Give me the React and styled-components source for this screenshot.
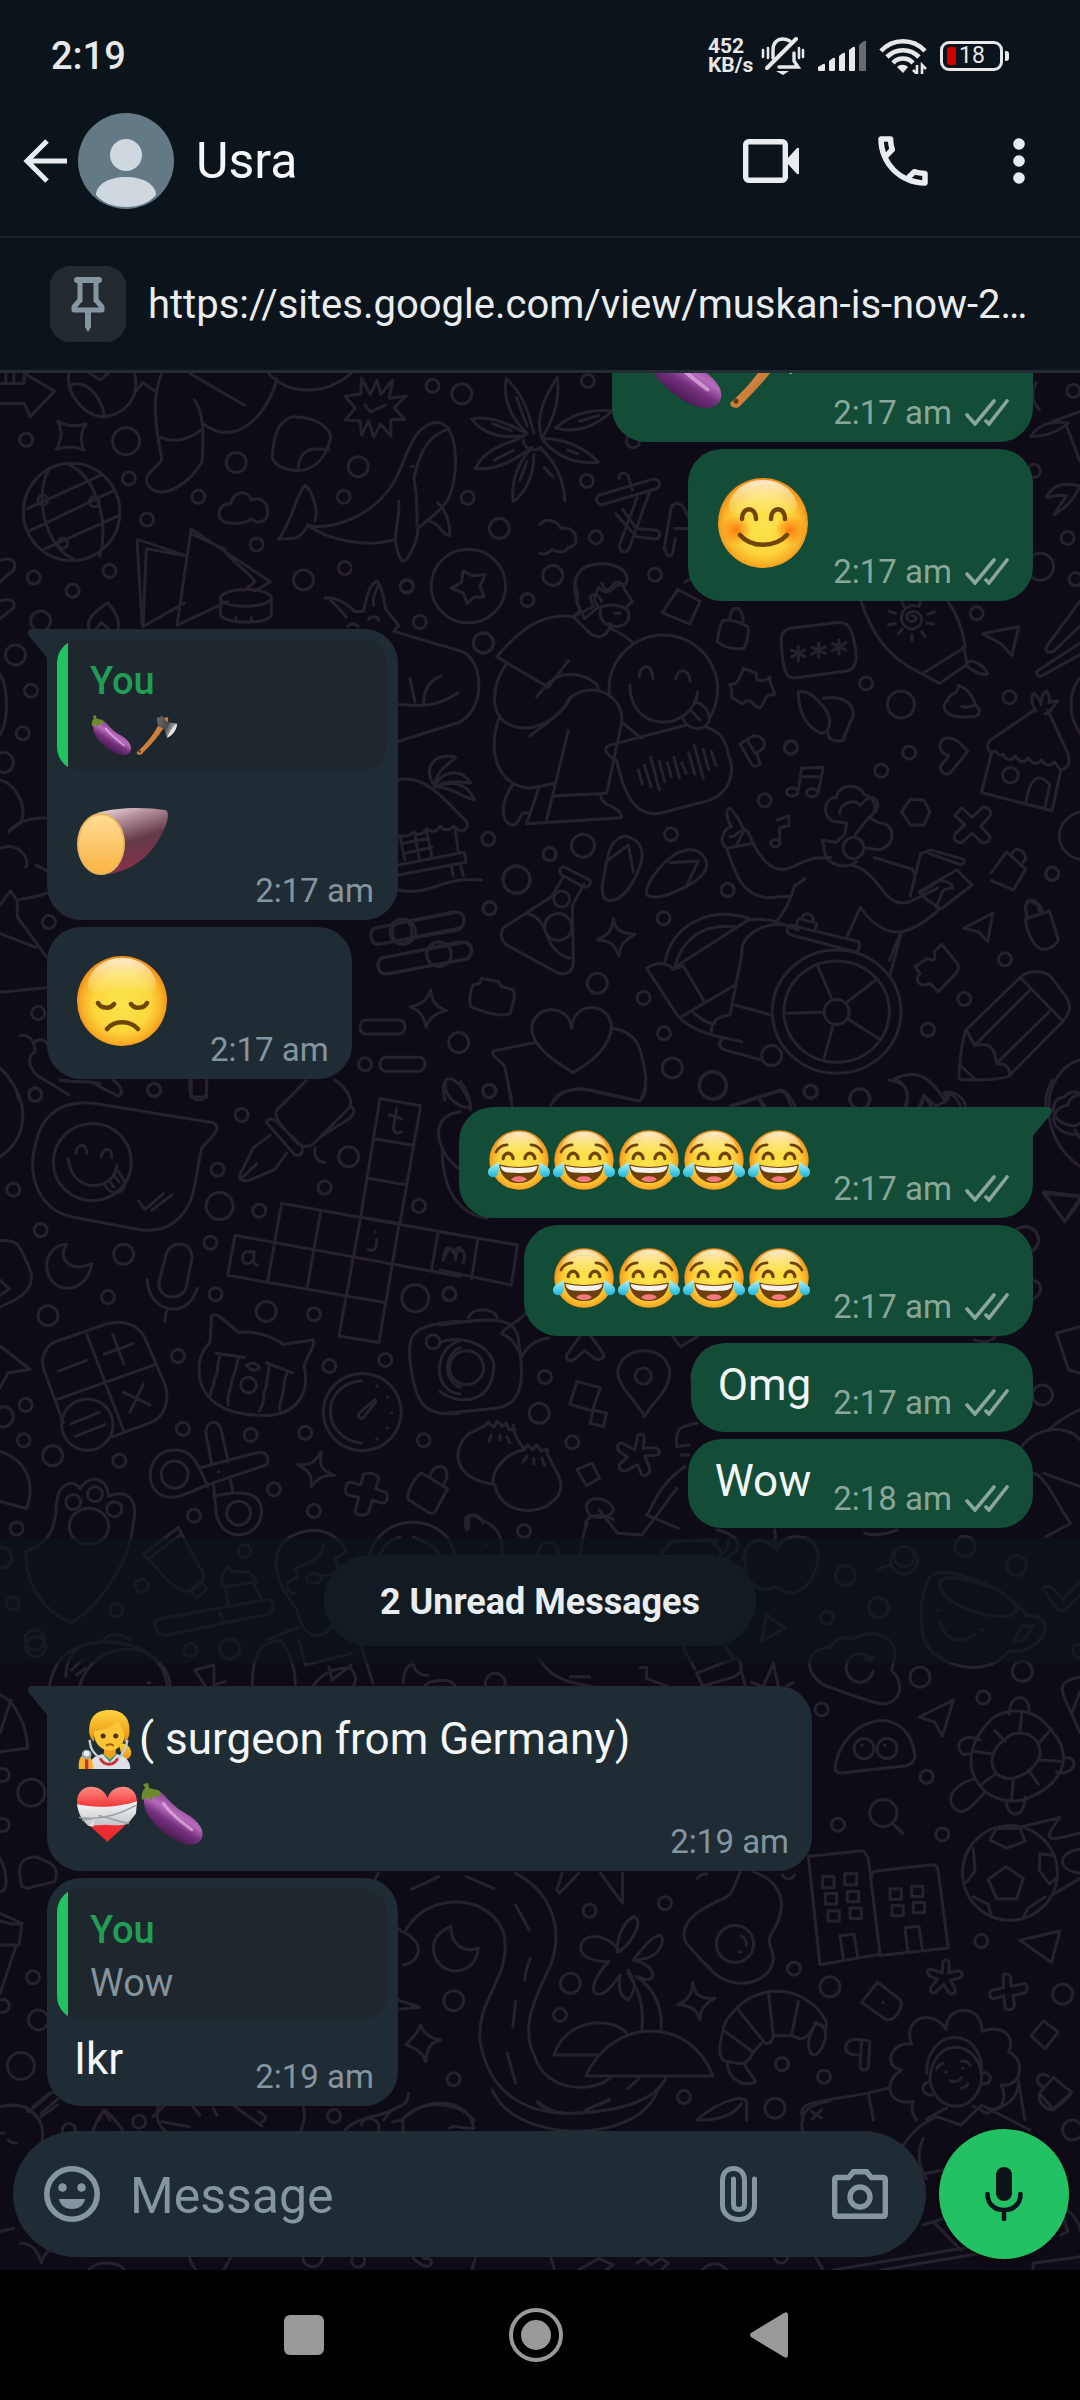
import React from "react";
import styled, { createGlobalStyle, css } from "styled-components";

const GlobalStyle = createGlobalStyle`
  *, *::before, *::after { box-sizing: border-box; }
  body { margin: 0; background: #000; }
  button { border: 0; padding: 0; background: none; color: inherit; font: inherit; cursor: pointer; }
  svg { display: block; flex: none; }
`;

/* ---------- layout ---------- */

const Screen = styled.div`
  display: flex;
  flex-direction: column;
  height: 100vh;
  font-family: Roboto, "Noto Sans", sans-serif;
  color: #e9edef;
  background: #0b141a;
`;

const StatusBar = styled.div`
  display: flex;
  align-items: center;
  flex: none;
  height: 86px;
  padding: 26px 71px 0 51px;
  color: #e8e8e8;
`;

const Clock = styled.time`
  flex: 1;
  font-size: 38px;
  font-weight: 500;
  line-height: 44px;
`;

const NetSpeed = styled.div`
  font-size: 21px;
  font-weight: 700;
  line-height: 19px;
  width: 53px;
`;

const StatusIcons = styled.div`
  display: flex;
  align-items: center;
  gap: 13px;
`;

const Battery = styled.div`
  display: flex;
  align-items: center;
`;

const BatteryShell = styled.div`
  display: flex;
  align-items: center;
  width: 63px;
  height: 30px;
  padding-left: 4px;
  border: 3px solid #e8e8e8;
  border-radius: 9px;
  font-size: 23px;
  line-height: 24px;
`;

const BatteryLevel = styled.span`
  width: 9px;
  height: 18px;
  margin-right: 3px;
  border-radius: 3px 1px 1px 3px;
  background: #d00000;
`;

const BatteryTip = styled.span`
  width: 4px;
  height: 10px;
  margin-left: 2px;
  border-radius: 0 3px 3px 0;
  background: #e8e8e8;
`;

const Header = styled.header`
  display: flex;
  align-items: center;
  flex: none;
  height: 152px;
  padding: 0 49px 0 23px;
  border-bottom: 2px solid #1a2329;
`;

const Contact = styled.h1`
  flex: 1;
  margin: 0 0 0 22px;
  font-size: 50px;
  font-weight: 400;
  line-height: 58px;
  color: #f5f7f8;
`;

const Avatar = styled.div`
  width: 96px;
  height: 96px;
  margin-left: 11px;
  border-radius: 50%;
  overflow: hidden;
  background: #637985;
`;

const HeaderActions = styled.div`
  display: flex;
  align-items: center;
  gap: 71px;
`;

const Pinned = styled.section`
  display: flex;
  align-items: center;
  gap: 22px;
  flex: none;
  height: 135px;
  padding: 0 40px 0 50px;
  border-bottom: 3px solid #242b32;
`;

const PinBadge = styled.span`
  display: grid;
  place-items: center;
  flex: none;
  width: 76px;
  height: 76px;
  border-radius: 20px;
  background: #232b31;
  color: #8596a0;
`;

const PinnedLink = styled.a`
  min-width: 0;
  padding-top: 2px;
  overflow: hidden;
  white-space: nowrap;
  text-overflow: ellipsis;
  font-size: 40px;
  line-height: 48px;
  color: #e9edef;
  text-decoration: none;
`;

const Main = styled.main`
  display: grid;
  grid-template: minmax(0, 1fr) / minmax(0, 1fr);
  flex: 1;
  min-height: 0;
  background: #0f0b16;
  overflow: hidden;
`;

const WallpaperSvg = styled.svg`
  grid-area: 1 / 1;
  width: 100%;
  height: 100%;
  fill: none;
  stroke: #26222d;
  stroke-width: 3px;
  stroke-linecap: round;
  stroke-linejoin: round;
  & g * { vector-effect: non-scaling-stroke; }
`;

const Chat = styled.div`
  grid-area: 1 / 1;
  display: flex;
  flex-direction: column;
  min-height: 0;
`;

const Messages = styled.div`
  display: flex;
  flex: 1;
  flex-direction: column;
  justify-content: flex-end;
  min-height: 0;
  overflow: hidden;
`;

const Group = styled.ol`
  display: flex;
  flex: none;
  flex-direction: column;
  align-items: ${(p) => (p.$out ? "flex-end" : "flex-start")};
  gap: 7px;
  margin: 0 0 ${(p) => p.$after || 0}px;
  padding: 0 47px;
  list-style: none;
`;

const Bubble = styled.li`
  position: relative;
  max-width: 86%;
  padding: 0 ${(p) => (p.$out ? 24 : 23)}px 0 27px;
  display: flex;
  column-gap: ${(p) => (p.$out ? 22 : 40)}px;
  justify-content: space-between;
  border-radius: 34px;
  background: ${(p) => (p.$out ? "#144d37" : "#1f2c34")};
  ${(p) =>
    p.$tail &&
    (p.$out
      ? css`border-top-right-radius: 0;`
      : css`border-top-left-radius: 0;`)}
  ${(p) =>
    p.$quoted &&
    css`
      flex-wrap: wrap;
      width: 351px;
      padding: 10px 11px 0 10px;
    `}
`;

const Body = styled.div`
  padding: ${(p) => (p.$quoted ? "13px 0 21px 17px" : "16px 0 21px")};
  font-size: 44px;
  line-height: 52px;
  color: #f3f6f7;
`;

const Line = styled.div`
  display: flex;
  align-items: center;
  height: ${(p) => p.$height}px;
`;

const Meta = styled.div`
  display: flex;
  align-items: center;
  align-self: flex-end;
  gap: 13px;
  padding: 0 ${(p) => (p.$quoted ? 13 : 0)}px 10px 0;
  font-size: 33px;
  line-height: 39px;
  white-space: nowrap;
  color: ${(p) => (p.$out ? "#89a69b" : "#8495a0")};
`;

const TailSvg = styled.svg`
  position: absolute;
  top: 0;
  ${(p) => (p.$out ? "right: -19px; transform: scaleX(-1);" : "left: -19px;")}
  fill: ${(p) => (p.$out ? "#144d37" : "#1f2c34")};
`;

const Quote = styled.blockquote`
  flex: none;
  width: 100%;
  margin: 0;
  padding: 20px 20px 14px 33px;
  border-radius: 24px;
  background: linear-gradient(to right, #22c163 11px, #1e272d 11px);
  font-size: 38px;
  line-height: 45px;
  color: #84949e;
`;

const QuoteAuthor = styled.div`
  margin-bottom: 8px;
  font-weight: 500;
  color: #229d57;
`;

const QuoteText = styled.div`
  display: flex;
  gap: 3px;
  height: 45px;
  align-items: center;
`;

const UnreadBand = styled.div`
  display: flex;
  justify-content: center;
  flex: none;
  margin: 10px 0 23px;
  padding: 17px 0;
  background: rgba(10, 21, 27, 0.6);
`;

const UnreadPill = styled.div`
  padding: 27px 56px 23px;
  border-radius: 46px;
  background: #121b21;
  font-size: 36px;
  font-weight: 700;
  line-height: 41px;
  color: #e9edef;
`;

const Composer = styled.form`
  display: flex;
  align-items: center;
  gap: 13px;
  flex: none;
  padding: 23px 11px 11px 13px;
`;

const InputPill = styled.div`
  display: flex;
  align-items: center;
  flex: 1;
  min-width: 0;
  height: 126px;
  padding: 0 38px 0 31px;
  border-radius: 63px;
  background: #1f2c34;
  color: #8596a0;
`;

const MessageInput = styled.input`
  flex: 1;
  min-width: 0;
  padding: 4px 0 0;
  margin-left: 30px;
  border: 0;
  outline: 0;
  background: transparent;
  font: 400 50px/58px Roboto, "Noto Sans", sans-serif;
  color: #e9edef;
  &::placeholder { color: #8596a0; opacity: 1; }
`;

const ClipButton = styled.button`
  margin-right: 75px;
`;

const MicButton = styled.button`
  display: grid;
  place-items: center;
  flex: none;
  width: 130px;
  height: 130px;
  border-radius: 50%;
  background: #22c163;
  color: #0b141a;
  box-shadow: 0 2px 5px rgba(0, 0, 0, 0.5);
`;

const NavBar = styled.nav`
  display: flex;
  align-items: center;
  justify-content: center;
  gap: 178px;
  flex: none;
  height: 130px;
  padding-right: 8px;
  background: #000;
  color: #999;
`;

/* ---------- emoji ---------- */

const EmojiDefs = () => (
  <defs>
    <radialGradient id="face" cx=".5" cy=".52" r=".52">
      <stop offset="0" stopColor="#fbe54d" />
      <stop offset=".62" stopColor="#fbd63c" />
      <stop offset=".85" stopColor="#f9b128" />
      <stop offset="1" stopColor="#f08a17" />
    </radialGradient>
    <linearGradient id="shine" x1="0" y1="0" x2="0" y2="1">
      <stop offset="0" stopColor="#fff" stopOpacity=".8" />
      <stop offset="1" stopColor="#fff3a0" stopOpacity=".15" />
    </linearGradient>
    <radialGradient id="blush">
      <stop offset="0" stopColor="#fd7008" stopOpacity=".9" />
      <stop offset="1" stopColor="#fd7008" stopOpacity="0" />
    </radialGradient>
    <linearGradient id="tear" x1="0" y1="0" x2="0" y2="1">
      <stop offset="0" stopColor="#b4f4f4" />
      <stop offset="1" stopColor="#1ab5dd" />
    </linearGradient>
    <linearGradient id="aubergine" x1=".7" y1=".2" x2=".3" y2=".8">
      <stop offset="0" stopColor="#7a3a80" />
      <stop offset=".4" stopColor="#b76bbc" />
      <stop offset=".65" stopColor="#74307c" />
      <stop offset="1" stopColor="#47184f" />
    </linearGradient>
    <linearGradient id="wood" x1="0" y1="0" x2="1" y2="1">
      <stop offset="0" stopColor="#eda45b" />
      <stop offset="1" stopColor="#b0601f" />
    </linearGradient>
    <linearGradient id="steel" x1="0" y1="0" x2="1" y2=".5">
      <stop offset="0" stopColor="#6b6b6e" />
      <stop offset=".6" stopColor="#4b4b4e" />
      <stop offset="1" stopColor="#d4d8da" />
    </linearGradient>
    <linearGradient id="skin" x1="0" y1="0" x2=".35" y2="1">
      <stop offset="0" stopColor="#f3dfe3" />
      <stop offset=".28" stopColor="#b08b98" />
      <stop offset=".6" stopColor="#643a49" />
      <stop offset="1" stopColor="#8a3049" />
    </linearGradient>
    <linearGradient id="flesh" x1="0" y1="0" x2="0" y2="1">
      <stop offset="0" stopColor="#ffdc95" />
      <stop offset="1" stopColor="#fbb444" />
    </linearGradient>
    <linearGradient id="heart" x1="0" y1="0" x2="0" y2="1">
      <stop offset="0" stopColor="#ff8a84" />
      <stop offset=".35" stopColor="#f23a3c" />
      <stop offset="1" stopColor="#e8262b" />
    </linearGradient>
    <linearGradient id="gauze" x1="0" y1="0" x2="0" y2="1">
      <stop offset="0" stopColor="#f7f7f7" />
      <stop offset="1" stopColor="#c3c6c9" />
    </linearGradient>
    <linearGradient id="hair" x1="0" y1="0" x2="0" y2="1">
      <stop offset="0" stopColor="#ffd23e" />
      <stop offset="1" stopColor="#e8920f" />
    </linearGradient>
  </defs>
);

const Face = () => (
  <>
    <circle cx="47" cy="47" r="45" fill="url(#face)" />
    <path d="M47 4C28 4 13 17 13 31c0 10 14 5 34 5s34 5 34-5C81 17 66 4 47 4z" fill="url(#shine)" />
  </>
);

const glyphs = {
  smile: {
    box: "0 0 94 94",
    label: "smiling face",
    art: (
      <>
        <Face />
        <circle cx="20" cy="54" r="15" fill="url(#blush)" />
        <circle cx="74" cy="54" r="15" fill="url(#blush)" />
        <g fill="none" stroke="#704409" strokeWidth="4.500" strokeLinecap="round">
          <path d="M26 43c0-13 14-13 14 0M55 43c0-13 14-13 14 0M24 59c11 13 35 13 47 0" />
        </g>
      </>
    ),
  },
  sad: {
    box: "0 0 94 94",
    label: "disappointed face",
    art: (
      <>
        <Face />
        <g fill="none" stroke="#704409" strokeWidth="4.500" strokeLinecap="round">
          <path d="M23 49c3 6 13 6 16 1M56 50c3 5 13 5 16-1M32 75c7-9 23-9 31 0" />
        </g>
      </>
    ),
  },
  joy: {
    box: "0 0 94 94",
    label: "face with tears of joy",
    art: (
      <>
        <Face />
        <g fill="none" stroke="#704409" strokeWidth="5" strokeLinecap="round">
          <path d="M12 35c4-8 10-11 17-11M82 35c-4-8-10-11-17-11" strokeWidth="4" />
          <path d="M23 45c1-11 14-11 15 0M56 45c1-11 14-11 15 0" />
        </g>
        <path d="M17 54q30 7 60 0c-1 17-12 28-30 28S18 71 17 54z" fill="#6d3f0a" />
        <path d="M19 56q28 6 56 0c-1 7-6 9-12 10-9 1-22 1-32 0-6-1-11-3-12-10z" fill="#f6f3ee" />
        <path d="M35 77c3-7 21-7 24 0q-12 7-24 0z" fill="#f57a80" />
        <path d="M16 50c2 12 1 21-7 23C2 74-2 67 1 61c3-5 9-6 15-11zM78 50c-2 12-1 21 7 23 7 1 11-6 8-12-3-5-9-6-15-11z" fill="url(#tear)" />
      </>
    ),
  },
  eggplant: {
    box: "0 0 64 64",
    label: "eggplant",
    art: (
      <>
        <path d="M5 17C7 8 19 7 25 14c7 8 12 13 21 18 13 7 20 18 15 26-5 7-17 5-27-1C19 48 3 33 5 17z" fill="url(#aubergine)" />
        <path d="M24 22c8 11 16 17 28 26" fill="none" stroke="#ecc3ec" strokeWidth="3" strokeLinecap="round" opacity=".6" />
        <path d="M4 3l5-1 1 5 9 2c3 1 3 5 0 7l-5-2-2 6-4-4-5 3c-1-5 0-9 3-12z" fill="#6c8b2c" />
      </>
    ),
  },
  axe: {
    box: "0 0 64 64",
    label: "axe",
    art: (
      <>
        <path d="M3 58C17 46 28 32 41 8l8-4 2 5C38 32 27 44 11 60c-3 4-10 2-8-2z" fill="url(#wood)" />
        <path d="M33 6l9-3 7 9 15 3c-1 10-7 18-15 21l-5-14-9-3z" fill="url(#steel)" />
        <path d="M64 15c-1 10-7 18-15 21 3-8 7-15 15-21z" fill="#dfe3e5" />
        <circle cx="7" cy="57" r="2" fill="#6b3509" />
      </>
    ),
  },
  potato: {
    box: "0 0 94 94",
    label: "roasted sweet potato",
    art: (
      <>
        <path d="M22 18c20-6 48-6 68-3 6 1 2 17-6 29-10 17-25 31-50 35z" fill="url(#skin)" />
        <ellipse cx="26" cy="49" rx="24" ry="31" fill="#eab75e" />
        <ellipse cx="26" cy="49" rx="22" ry="29" fill="url(#flesh)" />
      </>
    ),
  },
  doctor: {
    box: "0 0 64 64",
    label: "health worker",
    art: (
      <>
        <path d="M44 36c9 0 13 5 13 10s-4 8-9 7z" fill="url(#hair)" />
        <path d="M13 63c0-11 9-16 21-16s22 4 22 16z" fill="#dfdfe6" />
        <path d="M27 47l8 9 8-9z" fill="#2e9f74" />
        <path d="M29 40h12v8l-6 5-6-5z" fill="#f2a01c" />
        <path d="M18 24c0-12 6-18 16-18s17 6 17 18-7 20-16 20-17-8-17-20z" fill="#fdc534" />
        <path d="M14 27C12 11 20 2 34 2s23 8 21 25c-1 5-3 7-5 9 1-8-1-15-7-22-7 7-16 9-24 10-1 4-1 7 0 11-3-2-4-5-5-8z" fill="url(#hair)" />
        <g fill="#4a3016"><circle cx="28" cy="29" r="2.600" /><circle cx="41" cy="29" r="2.600" /></g>
        <path d="M31 39q4-3 8 0" stroke="#9a5a12" strokeWidth="2" fill="none" />
        <path d="M14 33c1 10 4 14 11 19M53 33c-1 10-4 14-10 19" stroke="#c5cbd0" strokeWidth="2.500" fill="none" />
        <path d="M25 52c4 8 14 8 18 0" stroke="#c8313a" strokeWidth="3" fill="none" />
        <path d="M3 63c-1-8 1-14 6-15s9 6 9 15z" fill="#f5b32c" />
        <circle cx="11" cy="48" r="5" fill="#9ea6ad" />
        <circle cx="11" cy="47" r="3" fill="#e8eef2" />
        <path d="M11 53v10" stroke="#c8313a" strokeWidth="3.500" />
      </>
    ),
  },
  mended: {
    box: "0 0 64 64",
    label: "mending heart",
    art: (
      <>
        <path d="M33 17C36 3 61 0 62 20c0 17-18 29-29 40C22 49 3 37 3 20 4 0 29 3 33 17z" fill="url(#heart)" />
        <path d="M3 23c18 4 42 3 59-3l-1 12-8 10c-6 2-13 2-21 1l-18 1C7 38 4 31 3 23z" fill="url(#gauze)" />
        <path d="M5 36c20 3 38-2 56-12M24 34l30 8M8 39l10-2" fill="none" stroke="#9b9ea2" strokeWidth="1.500" />
        <path d="M14 44l6-5-1 6z" fill="#e4e4e6" />
      </>
    ),
  },
};

const Emoji = ({ name, size }) => (
  <svg width={size} height={size} viewBox={glyphs[name].box} overflow="visible" role="img" aria-label={glyphs[name].label}>
    {glyphs[name].art}
  </svg>
);

const Cell = styled.span`
  display: grid;
  place-items: center;
  width: ${(p) => p.$width}px;
`;

const Emojis = ({ names, cell, size }) =>
  names.map((name, i) => (
    <Cell key={i} $width={cell}>
      <Emoji name={name} size={size} />
    </Cell>
  ));

/* ---------- wallpaper ---------- */

const S = 13;
const M = 20;
const L = 27;

const tiles = [
  {
    at: [0, 360], scale: [0.3444, 0.4719],
    dots: [[76, 169, S], [366, 172, L], [374, 251, S], [427, 338, S], [576, 290, S], [686, 217, M], [745, 391, S], [318, 447, S], [98, 461, S], [211, 489, S], [118, 553, M], [881, 466, M], [1001, 441, S], [998, 290, S], [1040, 226, M], [1256, 55, S], [1341, 72, M], [1358, 292, S], [1450, 357, M], [1181, 479, S], [1219, 555, S], [1532, 509, S], [1404, 600, M], [45, 625, M], [90, 701, S], [66, 791, S], [10, 853, M], [142, 1191, S], [111, 1384, S], [102, 1556, S], [448, 1547, S], [1418, 1015, S], [1421, 1162, S], [1500, 1102, L]],
    paths: [
      "M0 50h70V28L158 66 88 120 70 92H0M17 28v22M40 28v22",
      "M200 28c-10 40 40 90 100 93 60-5 110-40 90-93M200 55c40-15 90 10 104 66M260 28l30 14 25-14M390 70l25-22 35 18",
      "M470 28c-30 50-20 110 0 182-10 20-60 30-40 55 40 40 130-10 157-50 5-60 5-100-22-130M460 163c50 15 90 5 125-15M550 28l160 68M590 135c90 50 180-10 215-95M780 28c60 50 170 45 240 0",
      "M68 322a140 103 0 1 0 280 0a140 103 0 1 0-280 0M140 235c-40 50-10 160 70 185M200 222c70 20 120 110 90 195M80 315l210-70M85 362l245-85M130 400l215-70M110 297a14 11 0 1 0 28 0a14 11 0 1 0-28 0M260 300a14 11 0 1 0 28 0a14 11 0 1 0-28 0M168 388a14 11 0 1 0 28 0a14 11 0 1 0-28 0",
      "M168 130c30 12 55 12 82 5-18 22-16 35-7 56-25-10-50-8-80-2 18-22 18-38 5-59z",
      "M850 120c-50 10-55 50-60 85 10 25 50 28 75 30 40-2 80-20 95-70 0-20-40-45-110-45zM865 235c5-60 60-45 90-45",
      "M1050 38l25 35 20-30 10 30 35-30-10 38 50-5-35 25 30 25-40 0 0 35-30-25-20 28-15-35-20 30-4-30-44-2 30-25-30-25 45-5zM1060 95l15 15 45-15",
      "M808 380c30-5 60 10 85-30 60 10 180-10 250-90 40-50 50-125 130-128 60 10 60 110 30 160-20 30-70 50-90 65 0 30-30 70-45 70-40-50-5-80-10-128M885 265c-30 30-25 55-75 115M885 265c20 10 40 50 30 75M893 350c60 30 160 50 255 30M1305 145c-80 20-90 70-103 105 10 40 10 70 8 100M1240 340c40 5 40 30 65 32 5-20-10-55-35-70M1195 225h5",
      "M1550 155c-20-60-40-90-80-115-10 40 10 80 60 115-50-15-100-40-160-30 40 40 100 40 155 35-50 20-110 20-145 70 60 5 120-20 165-45-50 40-60 80-55 115 40-20 60-60 60-100M1500 80l30 60M1430 135l55 15M1435 212l55-20M1510 255l20-40M1520 170a30 20 0 0 0 50 15",
      "M660 345c-40-5-25-45 10-40 10-30 50-30 60-8 30-10 50 10 45 20 10 20-20 35-45 20-20 12-50 10-70 8z",
      "M400 380l140 35M398 385l15 175M555 358l230 112-45 20M555 358l-40 200M425 400l-10 165 120-50M425 400l115 15M560 370l90 30c20 30 80 50 90 70l-30 18M515 562l145-50M640 505c5-25 145-25 148 0-5 20-140 25-148 0v35c10 20 140 22 148 0v-35M685 545v8M730 545v8",
      "M258 569c-10-25 30-40 55-55 20 18 35 35 30 55M280 569l15-12 20 12",
      "M945 505c30-5 70 15 85 28h25c10-30 15-55 40-65 15 15 20 35 25 60l38 35-15 12 200 43c60 20 70 120-10 150l-175 40M960 510c20 10 35 25 45 35M1085 520c-5-15 5-30 12-40M1010 565c5-8 20-8 30 0M1070 550c8-8 25-8 30 2M1190 675l15 50M1230 730c0-30 15-50 50-60M1160 730c60 5 110 5 170-25",
      "M1252 479a108 78 0 1 0 216 0a108 78 0 1 0-216 0M1345 447l25 10 38-2-14 25 12 22-28 0-22 14-10-22-36-10 30-13z",
      "M0 425c30-8 50 0 40 20L0 470M0 510c30-5 45 0 40 15L0 548M0 665c25 30 25 100 0 130M0 890c50 10 80 60 60 90l-35 20c20-20 60-30 110-30M0 1035c50-15 90 20 75 40M105 1070l30 12M0 1155l30-30 20 20c20-5 50-5 85-15M50 1145v35l85 85M0 1215l35 10 70 20M0 1340l135-10",
      "M60 1432c30-5 45 20 40 35-20 10-20 30 10 50l90 40M100 1445c20-10 40 0 40 10M0 1500c30 20 50 45 55 68M555 1522v40h45v-40",
      "M1085 1205c-15 15-5 35 15 33l230-30c20-5 25-35 0-38zM1105 1268c-15 15-5 35 20 32l230-30c20-5 20-38-5-36zM1140 1212a28 26 0 1 0 56 0a28 26 0 1 0-56 0",
    ],
  },
  {
    at: [340, 580], scale: [0.3333, 0.3333],
    dots: [[430, 188, M], [445, 777, S], [629, 823, S], [529, 898, L], [729, 797, L - 4], [449, 985, S], [993, 763, S], [1163, 930, S], [971, 1015, S], [772, 1210, M], [911, 1254, S], [356, 1388, M], [75, 1453, S], [449, 1533, S], [972, 1360, S], [997, 1464, M], [1118, 1515, L], [1412, 1535, S], [1274, 661, S], [1352, 502, S], [562, 60, S], [200, 20, S], [665, 957, 16], [655, 1041, L]],
    paths: [
      "M705 0c0 25 15 40 5 65l10 25-20 20c-100-15-170 50-230 120l155 92 60-80M700 110l45 45c30 30 65 10 65-25M700 110l60-30-10-30c10-10 25-10 35 15M785 10c10 20 20 25 30 10 10-20 30-20 40 10l22 35-17 15M785 80c20-10 70-5 80 15 10 40-30 55-70 35-15-15-20-30-10-50M825 100h15M810 145c25 10 50 25 70 45",
      "M500 250c-50 70-50 160 10 185 70 30 150-20 185-85 70-50 160 0 150 80l-45 210-160 8M480 405c-40 110-10 210 90 220l75-15M570 468c50-40 90-60 120-115M590 350l35-40c50-50 140-20 150 15M685 452l-65 268M595 628l-35 103 285-18c-5-40-60-30-62-65M520 612c-40 50-40 120 0 123 25-5 10-45 50-35M850 430l55 45",
      "M897 290c5-40 40-40 42 5M1007 298c5-35 40-35 43 5M870 315c0 150 190 140 203 20M1028 415c20 40 70 40 80 5 0-30-20-50-45-55M1050 388l30 32M808 345a163 163 0 1 1 300 70",
      "M1040 435l-235 62c-20 10 0 30 25 45 20 90 50 170 130 158l145-38c60-20 85-80 60-140-10-50-30-70-65-80M895 570l12 42M913 555l20 65M932 532l26 98M958 545l16 60M982 548l12 43M1002 532l16 62M1025 548l14 32M1046 518l18 64M1063 495l27 100M1090 508l16 62M1114 514l14 42",
      "M1150 120c-15 20-15 50-18 65 15 15 50 25 80 20 10-20 15-45 12-65-20-12-50-20-74-20zM1170 120c0-50 40-45 40 5M1350 145c-30 10-28 30-25 60 5 60 10 95 45 88l150-20c30-5 35-40 22-90-10-45-20-60-55-55z",
      "M1375 198v45M1355 210l40 20M1395 210l-40 20M1436 190v42M1416 202l40 18M1456 200l-40 22M1497 180v42M1477 190l40 20M1518 188l-40 24",
      "M1210 265l40 15c-10 30 30 25 40 10-5 30 20 40 12 55-30-5-25 20-40 38-30 0-15-25-45-20-10 20-20-5-43-10 5-20 0-30-5-40 20 5 30-15 41-48z",
      "M1375 335c40-5 60 30 80 50 20 30 20 70-10 75-50-20-70-70-70-125zM1450 355c50-10 90 10 90 50-10 30-20 40-30 75-30 10-50-5-45-25",
      "M1200 492l40-25c40 0 45 40 10 50l10 35c-10 10-20 8-25 0zM1222 482l25 40",
      "M175 600c80-20 150 70 190 110 30 20 15 50-10 40-10-5-15-12-15-12-10 15-30 15-38 0-15 20-30 20-42 8-10 20-30 20-40 10-15 15-25 15-45 10M285 620c-40-60 0-100 60-90M285 620c0-40 30-60 62-88M285 620c20-50 80-55 108-10-40-5-70-10-108 10 50-20 100-10 118 40-40-10-70-40-118-40M180 770l15 70M225 765l12 70M260 755l15 72M345 745l10 70M190 790l75-15M195 820l80-18M175 855l198-38 5 30-203 38M335 860l5 28M362 855l8 32M175 930c100 20 120-40 250-30",
      "M95 1075c-10-15 0-35 30-35l215-45c40 0 40 45 15 50l-225 45c-20 5-35 0-35-15zM150 1055a38 38 0 1 0 76 0a38 38 0 1 0-76 0M115 1160c-5-20 10-30 30-30l215-45c40 0 45 45 15 52l-230 45c-20 0-30-8-30-22zM260 1123a37 37 0 1 0 74 0a37 37 0 1 0-74 0",
      "M670 860l80 40c5 15-10 25-20 20l-65-35c-10-10-5-20 5-25zM670 890l-35 60-140 90c-15 10-15 40 5 55l150 82c20 10 45 5 50-25l-3-175 35-65M560 1000c80 20 40 110 130 135",
      "M855 768c50 10 60 50 45 90-20 60-60 110-95 103-30-5-15-60-10-90 10-60 20-95 60-103zM805 840l60-45 15 80M920 940c-5-30 60-120 120-130 50-5 75 40 50 70-20 30-120 80-155 70-10 0-15-5-15-10zM990 848l85-5-35 75",
      "M820 1015c5 35 20 45 65 48-35 20-45 35-48 65-15-40-30-45-65-48 30-15 45-25 48-65zM272 1230c5 40 15 50 48 62-35 8-50 20-62 50-5-35-20-50-48-62 30-5 50-15 62-50z",
      "M400 1215l20-5 5-15 50 10 10 15 35 10c10 20-5 50-10 70-20 15-80-5-115-18-10-10-5-50 5-67zM75 1320h105c20 5 20 35 0 42H75c-20-5-20-35 0-42zM135 1432h105c20 5 20 35 0 42H135c-20-5-20-35 0-42z",
      "M695 1345c-10-80-120-70-120 5 10 60 80 100 125 128 50-30 110-70 115-140-10-75-115-75-120 7M585 1388l-125 25c-10 20 30 30 35 50l20 97M815 1345c80 10 90 60 103 150 0 20-5 40-15 65M640 1560c40-50 100-35 240 0M315 1560c-20-80 30-90 70 0",
      "M975 1145c20-100 120-170 250-130M1005 1160c20-80 80-130 180-120M1000 1165l225-145c80-10 110 20 150 30M920 1165c30-20 60-20 80 3l30-10 65 110-70 42M920 1165l95 145c50 50 120 60 190 75M1185 1215l-160 95M1340 1035c-70-10-140 30-135 90l-35 180c-40 5-60 20-55 60M1185 1275l110 30M1060 1298c20 15 40 35 65 33M1150 1375c-20 10-10 30 5 35l110 30M1265 1427a30 30 0 1 0 60 0a30 30 0 1 0-60 0M1160 805l80-15c40 80 80 90 120 70 50-25 70-30 90-25M1160 805c30 90 50 140 120 148l75-5M1365 915c-15 40-20 70-60 115M1155 800c-20-20 0-60 20-60-15-20-20-55-5-55 25 25 35 50 40 60 20 10 25 30 28 48M1170 770c20 5 25-25 40-15l-20 40",
      "M1385 565l65-3-15 75M1385 565l-10 65M1380 590h60M1340 636a17 12 0 1 0 34 0a17 12 0 1 0-34 0M1400 638a17 12 0 1 0 34 0a17 12 0 1 0-34 0M1312 720l35-12v28l-28 8v44M1292 790a14 11 0 1 0 28 0a14 11 0 1 0-28 0",
    ],
  },
  {
    at: [540, 360], scale: [0.3444, 0.3827],
    dots: [[139, 55, S], [136, 316, S], [162, 463, S], [37, 563, M], [334, 561, S], [270, 212, S], [1549, 81, S], [1434, 290, S], [1532, 465, S], [1555, 573, S], [1452, 540, L], [1268, 662, S], [1363, 881, S], [947, 845, S], [1048, 900, L], [729, 1013, S], [1072, 1026, S], [991, 1073, S], [1487, 1342, S], [28, 1291, S]],
    paths: [
      "M5 205c-20-60 10-110 45-160 10 60-10 110-45 160M45 178c50-40 110-50 165-45-50 40-100 60-165 45M5 205c60 0 120 20 165 62-60 5-120-10-165-62M0 230c40 30 70 80 72 138M115 160l55-15M80 235l30 10M12 280l25 25",
      "M175 352l150-40c25-5 30 20 10 25l-150 40c-20 5-30-20-10-25zM230 310c-5-20 25-20 28 0l10 30M320 340l-60 150c-10 20-35 10-28-10l50-120M240 390l40 50 60 5c15 10 5 25-10 22l-50-5-60-60M360 495l20-105c5-20 30-20 40 0l25 50M390 440h40M365 495c0 25 20 20 22 0l6-30",
      "M0 430c20-20 50-10 60 10 50-10 60 50 20 50-10 20-30 10-45 5-10 10-20 15-35 10",
      "M105 620c-15-50 10-80 50-85 50-10 110 10 95 50l-30 5c-20 20-30 20-50 5-10 20-20 30 0 50l-40 30c-15-20-20-35-25-55M400 600l65 30-30 60-80-30zM420 580l20-10",
      "M930 625c30 80 70 150 180 195l125-70c-10-60-30-95-55-125M1110 820l50 25 80-50-10-45M1240 790c20-10 50 10 60 30-20 5-40-5-60-20",
      "M1080 668c15 0 15 15 0 15s-25-20 0-25 40 25 15 40-50-10-45-30 25-30 45-25M1015 657l18 5M1012 692l20-3M1040 715l12-12M1080 735v-18M1118 722l-10-12M1142 690l-18-3M1145 658l-20 6M1105 632l-5 12M1050 632l7 12",
      "M1425 200c30-40 70-40 110-35-30 20-60 35-110 35M1490 160l78-25M1530 175l38 90M1470 360c20-40 60-40 98-30-20 40-50 60-75 75 10-20 30-40 35-50-20-5-40 0-58 5M1440 60c-15 30-10 50 10 70",
      "M1285 715l105-18-20 75-30-30zM1568 630l-90 110c-20 20 0 30 15 20l75-65M1568 740l-120 70c-15 10 0 20 10 15l110-55",
      "M1215 850c30 10 40 30 50 50 20 20 10 35-20 32-60 5-90-20-60-45 0-15 30-10 30-37M1225 905c20 5 30 0 40-5",
      "M1435 915l-130 80c-10 15-5 30 10 30 10-10 15 15 30 5 5 15 25 20 35 5 10 15 25 20 38 5 10 15 25 20 38 5 10 15 25 18 38 5l15 20c25 0 35-20 20-50l-55-105M1310 1030l-28 100 205 48 25-105M1410 1160c10-60 35-90 70-50l-15 65M1343 1085a23 20 0 1 0 46 0a23 20 0 1 0-46 0M1440 918c-15-20-15-40-5-48 10 10 18 20 20 30 0-20 5-30 15-35 10 10 10 20 8 30l25-5c-10 15-20 30-35 35",
      "M1170 990c30-10 50 10 72 33l-50 55c-15 10-30 0-30-15l25-30c-30-5-30-30-17-43zM1075 1148l40 2 17 30-17 35h-40l-25-35zM1205 1190l20-20 30 25 30-27c20 0 30 15 20 25l-25 25 25 25c5 15-10 20-22 18l-28-25-30 25c-20 0-25-10-20-22l28-25z",
      "M930 1165c-10-20-60-10-60 20M935 1160c20-30 60-15 40 20M850 1205c-40-20-15-70 10-60 5-40 70-40 80-10 40 10 40 50 15 60M850 1205l40 5-5 30-25 20-40-5 10 45c30 30 70 25 90 10M880 1275a30 28 0 1 0 60 0a30 28 0 1 0-60 0M915 1240l40-45 30 15c50 0 50 60 0 70l-40-5M740 1375l30-20M825 1300h20M970 1300l110 30c20 20 0 40-5 70M905 1320c90 20 90 120 170 95l80-35M1075 1400l30-110 30-10 95 25c5 10-5 15-15 12l-85-28M1100 1390l110-58 45 40-90 62c-20-10-40-20-65-44M1110 1390l50-30c20 0 40 10 38 20-20 0-30 0-38 30l-10 20M890 1510l40-80c70 90 140 80 230 5M1045 1500l-30 68",
      "M1310 1340l45-55 55 45-35 55-65-25M1370 1290c10-20 40-10 40 15l-15 15M1230 1485l85-40-15 75-25-25zM1410 1460l70-20 25 75c-10 20-40 30-55 22-20-10-40-50-40-77M1415 1450c-20-50 30-50 35-10",
      "M1568 830c-35 40-35 100 0 145M1568 1180c-80 20-80 110 0 125",
    ],
  },
  {
    at: [680, 860], scale: [0.3333, 0.3333],
    dots: [[143, 90, S], [1117, 42, S], [975, 298, S], [853, 417, S], [744, 509, S], [392, 695, S], [540, 716, M], [98, 676, L], [470, 456, 25], [1035, 1140, L]],
    paths: [
      "M277 455a192 184 0 1 0 386 0a192 184 0 1 0-386 0M312 455a158 152 0 1 0 316 0a158 152 0 1 0-316 0M412 315l45 105M585 362l-85 65M315 460l115-3M432 595l28-100M600 538l-95-60",
      "M330 195l205 50c10 15 0 30-12 30l-190-50c-15-5-15-25-3-30zM350 195l5-20 55 15-5 20M365 178c5-25 35-20 35 5M630 345l35-130",
      "M705 320l38-25c20 10 25 5 20-20l22-22 45 55c10 10 5 25-5 35l-50 52-25-25c-30 15-50-10-30-30z",
      "M858 510l165-160c20-20 70-20 90 0l45 60c20 30 10 50-10 75L990 645c-10 15-100 15-145 14-8 0-8-8-8-15 3-40 5-90 21-134zM1020 352l128 130M890 550l160-160M950 610l158-155M860 512l25 45c40-10 60 0 65 55 25-5 40 10 40 35M840 615l45 42",
      "M680 740c10-50-10-75-38-82 80-40 120 10 155 68 10-10 10-20 5-30 30 0 50 20 55 44M718 740l15-35 20 35M1200 600c-110 30-140 220 0 320M1200 700c-20-10-40 0-45 10-40 0-50 60-5 80 30 10 40 10 50 0M1185 810l15 25M150 738l150-48c20 0 30 20 45 48M235 715l15 25",
      "M1090 1000l110 10M1090 1000l65 85 45-60",
      "M1062 130c-30-20-30 30-18 45M1062 122c15 5 20 20 25 35",
    ],
  },
  {
    at: [0, 1080], scale: [0.3333, 0.3571],
    dots: [[106, 42, S], [462, 28, S], [725, 98, S], [653, 251, S], [659, 353, L], [778, 366, S], [40, 307, S], [122, 420, S], [371, 488, M], [324, 608, S], [144, 660, M], [631, 456, S], [647, 600, S], [799, 648, M], [942, 656, S], [974, 301, S], [1046, 215, M], [1257, 353, S], [1246, 611, L], [1348, 600, S], [534, 773, S], [988, 801, S], [1156, 784, S], [77, 910, S], [10, 943, M], [71, 1009, S], [158, 1052, M], [358, 1066, S], [549, 977, S], [752, 994, S], [916, 988, S], [1271, 1009, S], [822, 1146, S], [942, 1207, S], [582, 1220, S], [50, 1256, S], [5, 1338, M], [733, 1320, S], [425, 1416, S], [349, 1485, S], [38, 1466, S], [104, 1568, M], [220, 1182, 15], [285, 1160, 15], [343, 1202, 15], [1299, 733, 14], [524, 1105, 27], [716, 1213, 24]],
    paths: [
      "M180 0c60 10 80 0 120 10M270 5l85 40c20-10 5-30-15-45M570 0v30c5 35 48 35 50 0V0M0 215c80-50 90-140 30-215",
      "M280 65l360 55c20 10 15 25-35 70l-20 100c-10 70-60 140-160 130l-200-35c-120-20-140-130-120-200 15-70 60-130 175-120zM160 230a117 108 0 1 0 234 0a117 108 0 1 0-234 0M227 205c5-30 35-30 33 2M303 215c10-30 35-25 32 3M205 220c10 100 135 95 145 20M312 290c20 40 65 30 62-5l-20-30M330 285l12 15M345 270l12 15M415 338l20 25 55-45M455 365l60-43",
      "M830 85l90-85M830 85c-10 20 20 50 60 90 20 15 40 15 60-5l90-85c20-15 15-40-15-70l-20-15M800 120l85 90c20 5 30-15 15-30l-75-68c-15-5-25 0-25 8zM810 155l-50 35-40 75c-5 15 10 20 30 15l75-30 35-45M725 275l45-40M945 190c-5 25 10 40 30 40M960 160l85-50c20-15 20-25 10-35",
      "M1140 52l122 20-62 330-118-18zM1125 165l115 18M1105 275l110 18M845 345l535 90M845 345l-42 220M962 368l-40 212M1082 385l-65 332 120 18 60-330M705 435l675 115M705 435l-22 112 470 76M1315 425l-20 105M1060 495l-20 110",
      "M728 495c0-20 38-20 34 0-5 25-38 25-34 0M762 480c0 25-5 35 10 38M1125 425v1M1130 445c0 30-5 35-25 30M1190 80l-10 55c5 20 15 15 25 10M1168 98l36 10M1330 505l5-25c5-15 20-10 25 5 10-20 20-15 20-15",
      "M200 460c-30 40 10 80 75 55-15 90-130 90-135 5 0-35 30-60 60-60zM495 500c10-60 90-50 80 5l-15 70c-10 50-90 40-83-10zM442 558c0 90 120 120 150 25M500 645l-6 30M0 450c60-5 60 20 85 70 20 40 15 80-85 115M0 560l28 25-28 18",
      "M160 735l160-52c60-15 100 10 115 40l60 130c15 40 0 90-40 105l-120 42M160 735c-30 20-40 50-25 85l55 140M185 965a77 72 0 1 0 154 0a77 72 0 1 0-154 0M260 712l110 268M170 895l295-98M175 815l85-30M312 768l88-30M338 712l33 82M370 875l80 35M430 852l-40 78M213 963l85-33M227 998l87-33",
      "M0 745l90 65-65 10-25 42M0 1040c70 20 110 80 80 160L0 1180",
      "M715 707c50-5 100 10 135 33l90-12c10 15-25 50-27 75 20 90-40 140-125 136-110 0-200-40-190-145 5-30 15-40 32-60l5-72c10-12 20-5 80 45zM648 765l85 12M800 792l78 28M660 775c-10 20-5 20-8 40 0 20-15 20-10 35-5 10-10 20-10 32M715 780c-5 15-5 20-8 30-5 20-12 25-12 40-5 25-15 30-10 60M808 800c-5 20-2 25-8 45 5 20-15 25-8 45-5 15-5 30-15 38M862 820c-10 15-8 25-12 45 5 15-15 30-10 60M740 798c20-10 30-5 38 8-15 12-30 5-38-8zM722 855c0-30 45-30 48 0-5 25-40 30-48 0z",
      "M970 930a117 108 0 1 0 234 0a117 108 0 1 0-234 0M1085 842c-125 10-125 160 0 175M1075 935l50-40c10 5-20 30-30 45-10 15-20 5-20-5M1130 856h1M1162 888h1M1175 932h1M1162 975h1M1130 1005h1",
      "M1380 675c-150 10-155 40-150 110 15 120 40 160 150 148M1380 730c-80 20-85 140 0 150M1380 750c-50 20-50 90 0 110",
      "M603 1085l170-42c35-5 35 30 25 35l-175 55c-50 20-90 40-120 35-70-10-70-110 0-130 60-10 80 10 120 100M635 1075l-18-90c5-35 40-35 48 0l20 85M640 1130l10 90c20 80 130 65 135-10 0-60-60-60-145-45M690 1115l8 35M655 1097h2",
      "M963 1042c-5 40 0 50 40 65-40 0-50 10-70 32 5-30-5-45-40-62 35 5 50-5 70-35zM1090 1105c15-10 50 0 45 15l-8 25 30 10c10 10 5 30-10 30l-30-8-12 35c-10 10-35 10-40-5l12-38-35-8c-10-10-5-35 10-35l30 8zM1265 1100l78 45-35 60c-5 10-15 10-25 5l-58-35c-8-20 25-70 40-75zM1290 1110c10-40 60-35 50 5l-10 22",
      "M208 1250a58 50 0 1 0 118 0a58 50 0 1 0-118 0M78 1320c110-40 80-110 97-160 15-40 55-35 65-15 30-45 85-30 85 20 60-20 90 10 75 75-10 110-90 220-185 280-80-30-140-100-137-200",
      "M430 1328l105-75 75 130c5 20-20 50-60 48-50-20-70-60-120-103zM445 1340l95-65M570 1430l30-30 22 25-30 25zM665 1410c0-30 10-40 20-45 20 30 60-10 80 35v20l22 35M665 1410c20 20 40 0 105-5M675 1415l10 60M463 1525c0-10 5-10 10-15l325-55c30 0 25 30 10 40l-310 60c-15 0-35-15-35-30zM660 1490l10 28M310 1568c20-20 50-20 80 0",
      "M890 1480c-80-90-90-190 20-215 70-15 110 20 130 55l-35 20c15 25 20 80 10 110M890 1480c10 40 30 80 60 75 40 0 60-40 65-80M970 1298c0 40-30 50-85 70 0 0 10 15 5 25-40 10-35 40-5 45M920 1395a22 14 0 1 0 44 0a22 14 0 1 0-44 0M965 1390l45-8M1105 1340c30-140 250-130 260 0M1140 1335c10-40 40-50 60-55M1240 1280c30 10 60 20 80 50M800 1568l95-35",
    ],
  },
  {
    at: [440, 1080], scale: [0.4082, 0.3333],
    dots: [[120, 33, S], [908, 36, S], [669, 18, L], [1028, 57, M], [23, 642, S], [257, 891, S], [243, 1000, M], [324, 1087, S], [206, 1353, S], [265, 1418, M], [1286, 1399, M], [1137, 1430, M], [1476, 945, M], [498, 888, 16], [65, 863, 34]],
    paths: [
      "M0 455l190 40-15 120L0 570M92 480l-14 115M12 530l8-20c10-10 20 5 18 30 0-30 20-45 22-10l-3 20",
      "M15 0c-10 40 20 80 60 85M50 5c20 30 25 60 25 85M165 0l12 80M270 78c30-60 80-60 120-40l100 25c15-20 15-40 12-63M720 78l110-45c20 0 20 20 30 45M785 60l12 20M1180 78l5-30 30 30c30-15 30-20 20-40 20 0 30 15 40 40M1100 0c50 10 50 40 40 78M50 95c-80 10-60 120-5 170M1500 0c-10 30-20 50-15 90M1568 45c-20 0-30 20-30 30-50 10-50 90 30 90M5 200c0 130 40 200 110 215",
      "M0 735c160-30 190-20 195 70 10 90 10 170-60 180L0 1002M0 790c20-20 110-20 132 60 0 110-70 135-132 85M70 712c10-30 60-30 70 0M150 760c20-30 40-30 60-60M150 760c20 10 30 20 50 70 15-30 30-50 65-55M310 825l32-55M400 820l-30-50M310 825c-5 20 15 20 20 12l25-25 25 25c15 5 25-5 20-15",
      "M435 880c5-90 125-90 128 0-5 60-40 80-62 130-20-50-60-80-66-130M335 905l58 18-20 70-55-20zM375 990l33 10-8 40-32-10z",
      "M485 1065c15-5 15 0 15 15l-3 25 30-2c10 5 15 15 5 22l-30 3 12 38c0 15-10 25-20 18l-10-30-28 18c-15 5-20-10-15-20l18-20-22-20c-5-15 0-25 10-22l30 20z",
      "M125 1212c-90-20-100-100-55-150 30-20 40-20 50-37M180 1035c-5 25 20 60 27 75M120 1030l12 12 8-18 12 15 10-10 8 20 14 0M125 1065l-5 20M147 1065v15M163 1070l8 18M205 1110c-50 10-90 80-70 110 20 90 110 80 135 50 60-50 0-110-10-160M205 1110l10-15 12 15 10-15 10 18 16-5v18M212 1130l-8 16M230 1135v16M250 1135l6 22M335 1168l38-18 18 45-32 22z",
      "M65 1350c-10-50 0-60 60-15 30 30 30 70 25 95M70 1345v-30c10-20 30-10 35 15M110 1395h2M360 1290c-10-50 60-40 65 0-10 30-60 30-65 0M355 1330c10-30 50-30 70-10M345 1430c0-50 10-80 15-100M390 1290l45 70 60 5 85-140M505 1305l80 40M510 1300c20-50 40-100 90-140M580 1100c-5-60 10-60 50-70M635 865c-30 10-20 60 5 60M570 770l20 30 40-30M610 1095l-30 5M590 1125h20M740 1440c20-90 60-60 85-30 20-70 110-40 100 30M825 1410l-5-60M680 1350c60 20 70 60 10 90M570 1385l110-5",
      "M1480 335l88 12M1480 335l50 90 38-70M1420 1110c30-70 120-80 148-30M1455 1180c30 10 60 100 90 150l-60 40M1480 1180l88 40M1510 760l58-20M1510 760l30 110 28 10M1490 1050c20-20 50-50 78-60M1415 445c50-20 70 50 30 70M1440 600c40 0 40 40 10 60M1310 780c20 10 40 5 50-10M1040 1360c30 10 60 0 80-10",
    ],
  },
  {
    at: [640, 1540], scale: [0.3333, 0.3699],
    dots: [[616, 96, M], [561, 210, S], [716, 183, M], [792, 55, L], [975, 18, M], [1130, 69, M], [840, 371, M], [1147, 355, M], [1030, 426, S], [545, 458, S], [860, 640, S], [594, 770, S], [907, 796, S], [75, 982, S], [462, 1159, S], [570, 1208, M], [1024, 1084, S], [1268, 1228, M], [426, 1417, S], [552, 1451, S], [405, 1536, M], [132, 1506, S], [1318, 300, S], [730, 738, L], [672, 564, M], [741, 564, M]],
    paths: [
      "M60 42l38-42M215 0c20 20 30 30 25 40M265 0c0 20-10 40-25 40M410 25c-40-40-100-30-95 35 0 60 50 90 95 65 50 50 120-10 125-80 0-50-50-60-80-50M400 0l8 25M715 78l40-12M380 200c-5 30-10 50-17 75l73-38c-20-10-40-20-56-37z",
      "M870 100c-40 60-30 160-5 190 50 60 190 80 240 10M870 100c30-30 120 0 170 20 70 30 100 60 120 85 70-5 70 50 20 80-20 15-50 20-75 15M905 108c-20 20 20 60 80 80 60 20 140 30 145 0-10-40-80-65-130-75-40-10-80-15-95-5zM895 190h2M1025 242h2M898 222c20 50 60 60 105 35M1145 232l35 0-30 40-28 2z",
      "M1210 130c15-15 25 0 60 30l50-45M1215 140c30 40 45 60 60 50l45-40",
      "M560 395c-70-30-70-100 10-105 20-30 50-30 70-22 60-30 120-10 125 40 0 20-10 30-10 45 40 30 30 90-30 90-40-5-90-25-165-48zM700 355c-20 50-80 30-82-10 5-40 50-50 75-22l5-10M700 315l-8 12-20-5M130 290l35 60M255 285l25 35M170 360l115-40c15 0 20 15 18 35l-20 15-95 25zM305 360l12 35M370 395l30-62 15 62M335 385l30 10M440 395l20-10M0 345h20v30l60 20",
      "M838 478l102-45-33 98-22-38zM585 615c10-60 60-125 145-127 70 5 90 60 95 95 0 15-10 22-25 27l-195 20c-15 0-20-5-20-15M665 555h2M733 555h2M760 768l28 25",
      "M1060 480c50-30 120-20 155 15 30 30 60 60 55 100-5 60-70 90-110 105-60 15-120 0-155-55-30-60 0-120 55-165zM1115 525c50-10 90 10 85 60-20 40-60 60-100 60-50-10-60-60-15-100zM1065 515l30 30M1145 470l-5 50M1235 510l-40 40M1260 598l-60-3M1195 660l-30-38M1115 700l5-55M1025 660l45-30M1005 572l58 7M1108 472c0-60 60-60 60-8M1020 540c-60-20-80 20-50 40l20-2M1005 645c-80 20-90 70-50 88 20 5 40-10 80-52M1098 705c5 50 55 50 58-10M1270 590c50-10 40 50-20 38M1320 370c-60 10-60 30-45 60l45 90M1295 470l25-60",
      "M968 900a142 128 0 1 0 284 0a142 128 0 1 0-284 0M1098 883l52 32-20 55h-60l-25-52zM1070 780h70l15 35-55 18-50-22zM1200 848l45 5M1200 848l-2 45 30 37 20-15M1000 835l5 60-25 30M1000 965l45 20 10 35M1150 1020l15-25 50-30M1145 775l115-25c-50 60-50 70 60 42M1320 835c-70 10-70 60 0 65M1235 960l85-45",
      "M505 855l165-15 15 20 35 260-180 28zM695 910c0-10 5-15 15-15l165-17c15 0 20 10 20 20l30 205-205 20",
      "M548 910h34v30h-34zM614 902h36v30h-36zM556 956h34v28h-34zM622 950h34v28h-34zM564 1002h34v28h-34zM630 995h34v28h-34zM750 943h34v28h-34zM815 936h34v28h-34zM756 988h34v28h-34zM820 980h34v28h-34zM610 1132l-10-62 42-5 12 65M803 1110l-8-62 42-4 10 62",
      "M300 898c-20 40-20 65-60 75-70 30-120 60-105 110 30 40 60 60 90 90 70 50 170 20 175-40 0-30-20-40-8-65 80-110-10-160-50-170M229 1092a56 50 0 1 0 112 0a56 50 0 1 0-112 0M303 1070c10 5 18 15 16 25M298 1113h6M172 915c10-15 20-10 28-12M427 905c10 15 30 15 36 0",
      "M158 1197c5 30 20 45 66 42-30 15-45 35-44 57-10-25-20-35-67-40 30-10 45-30 45-59zM665 1250l48-55 70 50c5 20-15 55-45 52zM728 1250h2",
      "M290 1265c70-60 170-60 240 0 40 40 30 50 25 60-10-10-10-15-30-20M290 1265l85 95c15 5 25-10 25-20l-15-120M475 1248l-20 90c30 20 50 10 75-35M290 1265c-20 20-40 40-40 60l90 60 25-25M250 1325c-20 60-10 90 20 85 60 20 60-20 75-30M400 1340h55M262 1410c0 50 50 70 85 55-10-20-20-20-35-50M525 1310l-15 30c-10 30 0 60 20 50 20-15 40-60 15-80",
      "M618 1365c10-20 40-15 72-10l-5 70c-5 10-20 10-25 0l2-32c-30 0-50-5-44-28zM665 1355l-3 40M908 1150c0-20 20-20 20 0l-2 20 25-5c20 0 20 15 5 20l-25 5 15 25c0 15-15 15-20 8l-15-22-25 22c-10 5-20-5-12-15l18-20-25-10c-10-15 0-20 15-15l25 8zM1090 1175c10-5 25 0 22 10l2 22 40-8c10 5 10 20 0 25l-35 8 5 25c-5 15-20 15-28 10l-5-35-30 8c-15 0-15-20-5-22l35-8z",
      "M1140 1082l120-25-25 85zM1210 1300l45 30-40 45-42-35zM1240 1453l55 40-55 45-42-42zM1215 1480c-40-10-20-50 10-30",
      "M815 1363c-30-70 60-100 103-40 0-70 110-70 108 5 70-20 100 20 80 55 60 30 30 100-22 90 20 40 0 70-40 65M815 1363c-60-10-90 60-30 70-60 30-40 100 35 85-10 20 0 40 10 50M860 1440c0-120 160-130 165-10M870 1450a75 78 0 1 0 155 0c-10-100-140-110-155 0zM890 1430c5-10 15-15 20-15M965 1410c10-2 20 0 25 10M917 1438h3M967 1428h3M930 1462c15 5 30 0 35-8M965 1482c10-2 15-5 18-12M870 1465c-30 0-30 40 10 35M1025 1440c35-5 35 35 0 30M1000 1530l40 20c60-20 100-40 95-90l20 108M920 1535l-60 30",
      "M490 1568c-20-50 20-45 190-72l70-15M685 1495l15 73M515 1545l30 18M545 1540l-28 25M170 1568c80-60 150-70 150-45v45M180 1568c50 0 100-10 125-45",
    ],
  },
  {
    at: [0, 1640], scale: [0.5485, 0.3333],
    dots: [[65, 20, M], [347, 30, S], [419, 27, M], [903, 130, M], [5, 405, S], [57, 458, L], [5, 555, S], [60, 1012, S], [70, 1140, M], [38, 1278, L], [5, 1098, S], [1075, 812, S], [1040, 1030, M], [1021, 1125, S], [827, 1082, M], [827, 1318, S]],
    paths: [
      "M90 140c10-100 50-130 100-135 80 0 120 80 120 130M120 110c0-40 10-80 30-90M150 60l-20 30M140 105l15-20M145 140c20-140 150-160 160 0M270 128h3M355 90l35-15 0 60 20-10M355 90l20 50M460 140c0-90 10-130 50-140 20 30 30 100 28 140M545 0l12 75 85-35M570 140c20-50 50-60 70-55 10 20 10 40 5 50M600 80l5 40 35-45M655 0l25 130M735 130c0-40 10-60 20-55 0 20 15 35 25 30M775 140c0-20 50-30 55 0M985 60c20 60 60 70 95 80M1040 110h35",
      "M0 165c30 20 50 100 50 160L0 335M20 180L0 280M40 740c-10-60 0-80 10-85l15-5 20 15c20 10 20 40 15 60l-50 20zM0 820l40 30-5 65H0M40 850c-20 10-30-5-40-8M30 915L0 1060M0 655c15 50 15 100 0 100M0 1400c40-10 55 0 70 40M60 1400l30-40M105 1395l-30 35",
      "M690 700c-30 60 30 170 50 180 40 40 20 90-5 95M725 1080l40 22-35 5M740 1215c10-20 20-30 27-60 5 25 15 40 37 45-20 5-25 25-28 65-5-30-20-40-36-50zM822 860c0 50 20 80 50 65-5 90-75 90-82 5 0-40 15-60 32-70z",
      "M740 870c40-120 160-110 180 20 10 130-50 180-45 310 10 110 50 210 150 220 90 0 170-30 190-110M940 700c70 60 90 180 60 290-30 100-50 180-25 260 20 110 110 110 140 60M750 748l50-38M850 710l50 35M940 795l25 75M967 955c-5 20-10 50-10 65M940 1085l-5 75M925 1240l15 90M980 1385c15 20 30 35 45 32M1070 1408l40-25M1145 1345l20-30",
      "M1020 760l35-60M1020 760l-5-10 10-50M1095 700l40 90V700M1155 830c20 10 0 70-25 105M1155 830c-20 20-30 60-30 105M1130 935c-30-70-80-50-70 0 10 30 40 30 50 30M1155 960c40-90 60-90 50-40-10 30-30 40-50 40 50 20 40 80 10 50M1110 965c-30 50-40 110-10 95 10-10 20-30 30-55 0 30-5 60 15 75 20-40 10-60 0-90M1145 1000c20 50 30 100 25 170M1160 1010c30 30 50 90 45 165M1010 1245c20-110 110-120 135-60M1010 1245h80M1068 1308c50-180 190-180 232 0z",
      "M700 1440c20-60 40-20 45-80M180 1440l10-30 10 30M280 1430l20-35M735 1435c30-50 90-60 130 5",
    ],
  },
  {
    at: [0, 2090], scale: [0.6888, 0.3333],
    dots: [[100, 120, S], [202, 95, S], [485, 78, S], [520, 512, S], [1134, 500, S], [1557, 120, M], [454, 500, M]],
    paths: [
      "M0 50c40-20 70 30 60 120-5 60-20 90-25 140M40 65c20-20 30-60 40-60M60 70l25-45M0 130h5M12 150c5 10 10 10 12 10M135 123c5-30 10-55 18-63 10 20 20 40 25 63M230 48c-5 30 0 60 10 75M235 95l40 15M440 48c5 30 0 50-3 75M280 50l10 25M310 55l5 20M375 65c10 10 15 20 5 30M340 48l40 60M500 123c20-50 60-40 80-75M525 105c0-25 20-25 25 0v18M570 95l15-5v35M590 80c30-60 90-60 98 35-10 5-30-15-35 0",
      "M715 0c30 160 210 170 240 0M780 38c10 20 20 30 36 32M850 60l35-32M1165 123c-5-60 10-80 40-90M1310 170c20-60 30-70 50-90l35 25 30-60 70 75M1340 145c-10 50-5 90 5 120M1345 250l25-10M1340 405l30-20M1355 395l40 85",
      "M1510 10c-5 30 10 50 20 50 10-20 25-40 25-55M0 425l20-10M30 460c20 0 25 30 30 58 5-30 10-40 20-40M130 538c10-25 40-25 50 0M275 500c0 10 5 30 10 40M325 540l10-38M600 505c10 20 20 30 25 20 5-20-5-20-10-20M690 505l-5 35M800 505l5 35M840 540l30-35 20 20-10 15M925 520l10-15 10 20 15-20 10 15-10 20M1020 540c10-25 25-25 35 0M1185 505l10 35M1210 540l215-75M1280 540l200-70M1500 540v-20l68-20M1550 360c10 20 18 40 18 60M1545 385l5 40-10 10",
    ],
  },
];

const Wallpaper = () => (
  <WallpaperSvg viewBox="0 373 1080 1897" preserveAspectRatio="xMidYMin slice" aria-hidden="true">
    <EmojiDefs />
    {tiles.map(({ at: [x, y], scale: [sx, sy], dots, paths }, i) => (
      <g key={i}>
        <g transform={`translate(${x} ${y}) scale(${sx} ${sy})`}>
          {paths.map((d, j) => <path key={j} d={d} />)}
        </g>
        {dots.map(([cx, cy, size], j) => (
          <circle key={j} cx={x + cx * sx} cy={y + cy * sy} r={size / 2} />
        ))}
      </g>
    ))}
  </WallpaperSvg>
);

/* ---------- icons ---------- */

const line = { fill: "none", stroke: "currentColor" };

const BellOffIcon = () => (
  <svg width="44" height="38" viewBox="0 0 44 38" {...line} strokeWidth="3.400" strokeLinecap="round">
    <path d="M12 21V13c0-7 4-11 10-11 3 0 5 1 7 2M33 16v8l4 6H18" />
    <path d="M35 2L6 31" strokeWidth="4" />
    <path d="M15 34h13l-6 4z" fill="currentColor" stroke="none" />
    <path d="M2 13v7M7 11v10M38 11v10M42 13v7" strokeWidth="2.600" />
  </svg>
);

const SignalIcon = () => (
  <svg width="48" height="32" viewBox="0 0 48 32" fill="currentColor">
    <path d="M0 27l5-3q2-1 2 1v5q0 1-1 1H1q-1 0-1-1zM11 21l4-3q2-1 2 1v11q0 1-1 1h-4q-1 0-1-1zM21 16l4-3q2-1 2 1v16q0 1-1 1h-4q-1 0-1-1zM31 10l4-3q2-1 2 1v22q0 1-1 1h-4q-1 0-1-1z" />
    <path d="M41 5l5-4q2-1 2 1v28q0 1-1 1h-5q-1 0-1-1z" opacity=".42" />
  </svg>
);

const WifiIcon = () => (
  <svg width="48" height="36" viewBox="0 0 48 36" {...line} strokeWidth="4.600">
    <path d="M2 13c12-13 32-13 44 0M8 19c9-9 23-9 32 0M14 25c5-6 15-6 20 0" />
    <path d="M18 29c3-3 8-3 11 0l-5 6z" fill="currentColor" stroke="none" />
    <path d="M38 27v9l-4-4M43 36v-9l4 4" strokeWidth="2.600" />
  </svg>
);

const BackIcon = () => (
  <svg width="44" height="44" viewBox="0 0 44 44" {...line} strokeWidth="5">
    <path d="M44 22H4M24 2L4 22l20 20" />
  </svg>
);

const PersonIcon = () => (
  <svg width="96" height="96" viewBox="0 0 96 96" fill="#cfd8df">
    <circle cx="48" cy="42" r="16" />
    <path d="M18 82c0-10 12-18 30-18s30 8 30 18c-7 8-17 12-30 12s-23-4-30-12z" />
  </svg>
);

const VideoIcon = () => (
  <svg width="56" height="44" viewBox="0 0 56 44" {...line}>
    <rect x="2.700" y="2.700" width="39.600" height="38.600" rx="3" strokeWidth="5.400" />
    <path d="M44 20L54 9q2-1 2 1v24q0 2-2 1L44 24z" fill="currentColor" stroke="none" />
  </svg>
);

const PhoneIcon = () => (
  <svg width="66" height="66" viewBox="0 0 24 24" fill="currentColor">
    <path d="M6.54 5c.06.89.21 1.76.45 2.59l-1.2 1.2c-.41-1.2-.67-2.47-.76-3.79h1.51m9.86 12.02c.85.24 1.72.39 2.6.45v1.49c-1.32-.09-2.59-.35-3.8-.75l1.2-1.19M7.5 3H4c-.55 0-1 .45-1 1 0 9.39 7.61 17 17 17 .55 0 1-.45 1-1v-3.49c0-.55-.45-1-1-1-1.24 0-2.45-.2-3.57-.57-.1-.04-.21-.05-.31-.05-.26 0-.51.1-.71.29l-2.2 2.2c-2.83-1.45-5.15-3.76-6.59-6.59l2.2-2.2c.28-.28.36-.67.25-1.02C8.7 6.45 8.5 5.25 8.5 4c0-.55-.45-1-1-1z" />
  </svg>
);

const MenuIcon = () => (
  <svg width="24" height="46" viewBox="0 0 24 46" fill="currentColor">
    <circle cx="12" cy="6" r="5.800" />
    <circle cx="12" cy="23" r="5.800" />
    <circle cx="12" cy="40" r="5.800" />
  </svg>
);

const PinIcon = () => (
  <svg width="34" height="56" viewBox="0 0 34 56" {...line} strokeWidth="5">
    <path d="M6 4h22" strokeWidth="6" strokeLinecap="round" />
    <path d="M9 4v22M25 4v22" />
    <path d="M9 24L3 31v3h28v-3l-6-7" strokeLinejoin="round" />
    <path d="M14 34h6v17l-3 5-3-5z" fill="currentColor" stroke="none" />
  </svg>
);

const TicksIcon = () => (
  <svg width="44" height="27" viewBox="0 0 44 27" {...line} strokeWidth="3.600" strokeLinecap="round">
    <path d="M2 16l8 9L29 2M21 22l3 3L42 2" />
  </svg>
);

const SmileyIcon = () => (
  <svg width="56" height="56" viewBox="0 0 56 56" fill="currentColor">
    <circle cx="28" cy="28" r="25.200" {...line} strokeWidth="5.600" />
    <circle cx="18.500" cy="21.500" r="4.300" />
    <circle cx="37.500" cy="21.500" r="4.300" />
    <path d="M15 33h26c-1 6-6 10-13 10s-12-4-13-10z" />
  </svg>
);

const ClipIcon = () => (
  <svg width="37" height="56" viewBox="0 0 37 56" {...line} strokeWidth="5" strokeLinecap="round">
    <path d="M34.500 13v26c0 9-7 14.500-15.500 14.500S2.500 48 2.500 39V14C2.500 7 7 2.500 13.500 2.500S24.500 7 24.500 14v24c0 3.500-2 5.500-5.500 5.500s-5.500-2-5.500-5.500V13" />
  </svg>
);

const CameraIcon = () => (
  <svg width="56" height="50" viewBox="0 0 56 50" {...line} strokeWidth="5.400">
    <path d="M5 8.500h11.500l5-5.800h13l5 5.800H51c1.500 0 2.300 1 2.300 2.300v34c0 1.500-.8 2.500-2.300 2.500H5c-1.500 0-2.300-1-2.300-2.500v-34c0-1.300.8-2.300 2.300-2.300z" />
    <circle cx="28" cy="28" r="10" />
  </svg>
);

const MicIcon = () => (
  <svg width="40" height="54" viewBox="0 0 40 54" {...line} strokeWidth="4.600" strokeLinecap="round">
    <rect x="12" y="0" width="16" height="34" rx="8" fill="currentColor" stroke="none" />
    <path d="M3.500 27c0 10 7 16 16.500 16s16.500-6 16.500-16M20 43v9" />
  </svg>
);

/* ---------- messages ---------- */

const Tail = ({ out }) => (
  <TailSvg $out={out} width="20" height="30" viewBox="0 0 20 30" aria-hidden="true">
    <path d="M20 0H4C0 0-1 4 1 7l19 23z" />
  </TailSvg>
);

const Message = ({ out, tail, quote, time, children }) => (
  <Bubble $out={out} $tail={tail} $quoted={!!quote}>
    {tail && <Tail out={out} />}
    {quote && (
      <Quote>
        <QuoteAuthor>You</QuoteAuthor>
        <QuoteText>{quote}</QuoteText>
      </Quote>
    )}
    <Body $quoted={!!quote}>{children}</Body>
    <Meta $out={out} $quoted={!!quote}>
      <time>{time}</time>
      {out && <TicksIcon />}
    </Meta>
  </Bubble>
);

const Big = ({ name }) => (
  <Line $height={115}><Emojis names={[name]} cell={96} size={94} /></Line>
);

const Laughs = ({ count }) => (
  <Line $height={74}><Emojis names={Array(count).fill("joy")} cell={65} size={62} /></Line>
);

export default function App() {
  return (
    <Screen>
      <GlobalStyle />
      <StatusBar>
        <Clock>2:19</Clock>
        <NetSpeed>452 KB/s</NetSpeed>
        <StatusIcons>
          <BellOffIcon />
          <SignalIcon />
          <WifiIcon />
          <Battery>
            <BatteryShell><BatteryLevel />18</BatteryShell>
            <BatteryTip />
          </Battery>
        </StatusIcons>
      </StatusBar>

      <Header>
        <button type="button" aria-label="Back"><BackIcon /></button>
        <Avatar><PersonIcon /></Avatar>
        <Contact>Usra</Contact>
        <HeaderActions>
          <button type="button" aria-label="Video call"><VideoIcon /></button>
          <button type="button" aria-label="Voice call"><PhoneIcon /></button>
          <button type="button" aria-label="More options"><MenuIcon /></button>
        </HeaderActions>
      </Header>

      <Pinned aria-label="Pinned message">
        <PinBadge><PinIcon /></PinBadge>
        <PinnedLink href="#pinned">https://sites.google.com/view/muskan-is-now-2…</PinnedLink>
      </Pinned>

      <Main>
        <Wallpaper />
        <Chat>
          <Messages>
            <Group $out $after={28}>
              <Message out time="2:17 am">
                <Line $height={105}><Emojis names={["eggplant", "axe"]} cell={86} size={82} /></Line>
              </Message>
              <Message out time="2:17 am"><Big name="smile" /></Message>
            </Group>
            <Group $after={28}>
              <Message tail time="2:17 am" quote={<><Emoji name="eggplant" size={42} /><Emoji name="axe" size={42} /></>}>
                <Big name="potato" />
              </Message>
              <Message time="2:17 am"><Big name="sad" /></Message>
            </Group>
            <Group $out>
              <Message out tail time="2:17 am"><Laughs count={5} /></Message>
              <Message out time="2:17 am"><Laughs count={4} /></Message>
              <Message out time="2:17 am">Omg</Message>
              <Message out time="2:18 am">Wow</Message>
            </Group>
            <UnreadBand><UnreadPill>2 Unread Messages</UnreadPill></UnreadBand>
            <Group>
              <Message tail time="2:19 am">
                <Line $height={74}>
                  <Emojis names={["doctor"]} cell={65} size={62} />
                  <span>( surgeon from Germany)</span>
                </Line>
                <Line $height={74}><Emojis names={["mended", "eggplant"]} cell={65} size={65} /></Line>
              </Message>
              <Message time="2:19 am" quote="Wow">Ikr</Message>
            </Group>
          </Messages>
          <Composer onSubmit={(e) => e.preventDefault()}>
            <InputPill>
              <button type="button" aria-label="Emoji"><SmileyIcon /></button>
              <MessageInput type="text" placeholder="Message" aria-label="Message" />
              <ClipButton type="button" aria-label="Attach"><ClipIcon /></ClipButton>
              <button type="button" aria-label="Camera"><CameraIcon /></button>
            </InputPill>
            <MicButton type="button" aria-label="Record voice message"><MicIcon /></MicButton>
          </Composer>
        </Chat>
      </Main>

      <NavBar>
        <button type="button" aria-label="Recent apps">
          <svg width="54" height="54" viewBox="0 0 54 54" fill="currentColor"><rect x="7" y="7" width="40" height="40" rx="6" /></svg>
        </button>
        <button type="button" aria-label="Home">
          <svg width="54" height="54" viewBox="0 0 54 54" fill="currentColor">
            <circle cx="27" cy="27" r="25" {...line} strokeWidth="4" />
            <circle cx="27" cy="27" r="15" />
          </svg>
        </button>
        <button type="button" aria-label="Back">
          <svg width="54" height="54" viewBox="0 0 54 54" fill="currentColor"><path d="M10 25L43 5q4-2 4 2v40q0 4-4 2L10 29q-2-2 0-4z" /></svg>
        </button>
      </NavBar>
    </Screen>
  );
}
